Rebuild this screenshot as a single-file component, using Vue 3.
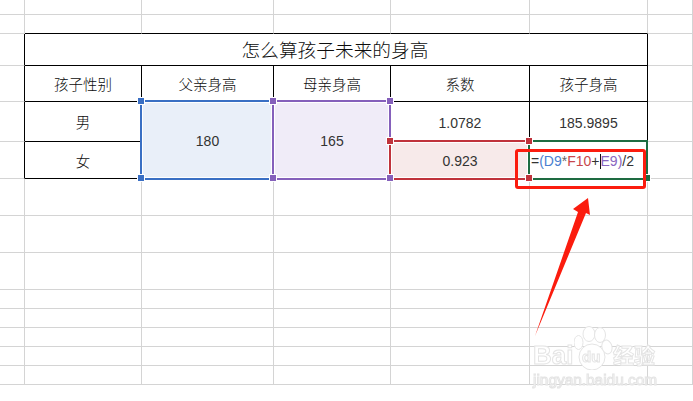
<script setup>
const blank = (n) => Array.from({ length: n }, () => ({ k: 'g' }))
const cells = [
  ...blank(7),
  { k: 'g' }, { k: 'g tb' }, { k: 'g tb' }, { k: 'g tb' }, { k: 'g tb' }, { k: 'g tb' }, { k: 'g' },
  { k: 'g lb' }, { k: 't title', text: '怎么算孩子未来的身高' }, { k: 'g' },
  { k: 'g lb' }, { k: 't cjk', text: '孩子性别' }, { k: 't cjk', text: '父亲身高' }, { k: 't cjk', text: '母亲身高' }, { k: 't cjk', text: '系数' }, { k: 't cjk', text: '孩子身高' }, { k: 'g' },
  { k: 'g lb' }, { k: 't cjk', text: '男' }, { k: 't tall low', text: '180', mark: 'blue', handles: ['tl', 'bl'] }, { k: 't tall low', text: '165', mark: 'purple', handles: ['tl', 'tr', 'bl', 'br'] }, { k: 't low', text: '1.0782' }, { k: 't low', text: '185.9895' }, { k: 'g' },
  { k: 'g lb' }, { k: 't cjk', text: '女' }, { k: 't red low', text: '0.923', mark: 'red', handles: ['tl', 'pbl'] }, { k: 't formula low', mark: 'green', handles: ['rtl', 'rbl', 'br'] }, { k: 'g' },
  ...blank(7 * 8),
]
</script>

<template>
  <div class="sheet">
    <div v-for="(c, i) in cells" :key="i" class="cell" :class="c.k">
      <div v-if="c.mark" class="mark" :class="c.mark">
        <i v-for="h in c.handles" :key="h" class="handle" :class="h"></i>
      </div>
      <span v-if="c.text" class="label">{{ c.text }}</span>
      <span v-if="c.mark === 'green'" class="label code"><b class="ink">=</b><b class="fb">(D9</b><b class="star">*</b><b class="rd">F10</b><b class="ink">+</b><b class="caret"></b><b class="pp">E9)</b><b class="ink">/2</b></span>
    </div>

    <div class="callout"></div>
    <svg class="arrow" width="70" height="150" viewBox="530 195 70 150">
      <polygon points="588,198 590,215 586,213 535,336 578,212 573,209" fill="#fb1c0e" />
    </svg>

    <div class="wm">
      <svg class="paw" width="48" height="44" viewBox="0 0 48 44">
        <g fill="#fff" stroke="#e4e4e4" stroke-width="1">
          <ellipse cx="4.5" cy="16.5" rx="4.5" ry="7" />
          <ellipse cx="15" cy="8" rx="6" ry="7.5" />
          <ellipse cx="26" cy="9" rx="5.5" ry="7.5" />
          <ellipse cx="33" cy="21" rx="5" ry="7" transform="rotate(-15 33 21)" />
          <circle cx="18" cy="31" r="13" />
        </g>
      </svg>
      <span class="w big a">Bai</span>
      <span class="w du">du</span>
      <span class="w big c">经验</span>
      <span class="w url">jingyan.baidu.com</span>
    </div>
  </div>
</template>

<style>
html, body { margin: 0; background: #fff; }
</style>

<style scoped>
.sheet {
  position: relative;
  width: 693px;
  height: 401px;
  overflow: hidden;
  background: #fff;
  display: grid;
  grid-template-columns: 25px 117px 132px 117px 139px 118px 45px;
  grid-template-rows: 15px 19px 32px 36px 40px 37px 37px 37px 37px 19px 19px 19px 19px 19px 17px;
  font-family: "Liberation Sans", "Noto Sans CJK SC", sans-serif;
  font-size: 14px;
  font-weight: 300;
  color: #333;
}
.cell {
  box-sizing: border-box;
  position: relative;
  display: flex;
  align-items: center;
  justify-content: center;
  min-width: 0;
}
.g { border-right: 1px solid #d4d4d4; border-bottom: 1px solid #d4d4d4; }
.g.tb { border-bottom-color: #000; }
.g.lb { border-right-color: #000; }
.t { border-right: 1px solid #000; border-bottom: 1px solid #000; }
.cjk { font-size: 14.5px; color: #0c0c0c; }
.title { grid-column: span 5; font-size: 18.7px; color: #0c0c0c; }
.title .label { top: -1px; left: -1px; }
.tall { grid-row: span 2; }
.red { grid-column: 5; }
.formula { grid-column: 6; justify-content: flex-start; }
.label { position: relative; z-index: 2; }
.low .label { top: 1px; }
.code { display: flex; align-items: center; margin-left: 1px; white-space: pre; }
.code b { font-weight: 300; }
.ink { color: #333; }
.fb { color: #4a7fd0; }
.star { color: #666; }
.rd { color: #c8474c; }
.pp { color: #8a66c0; }
.caret { width: 1px; height: 15px; background: #111; }

.mark {
  position: absolute;
  z-index: 1;
  box-sizing: border-box;
  left: -2px;
  top: -2px;
  right: -1px;
  bottom: -2px;
  border: 2px solid;
  box-shadow: inset 0 0 0 1px #fff;
}
.mark.blue { border-color: #3a6fc4; background: #e9eff9; }
.mark.purple { border-color: #8560bb; background: #f0ecf8; }
.mark.red { border-color: #c0333c; background: #f7eaea; }
.mark.green { border-color: #1e6b41; box-shadow: none; background: transparent; }
.handle {
  position: absolute;
  width: 6px;
  height: 6px;
  outline: 1px solid #fff;
  z-index: 3;
}
.mark.blue .handle { background: #3a6fc4; }
.mark.purple .handle { background: #8560bb; }
.mark.red .handle { background: #c0333c; }
.mark.green .handle { background: #1e6b41; }
.mark .handle.pbl { background: #8560bb; }
.mark .handle.rtl, .mark .handle.rbl { background: #c0333c; }
.tl, .rtl { left: -4px; top: -4px; }
.tr { right: -4px; top: -4px; }
.bl, .rbl, .pbl { left: -4px; bottom: -3px; }
.br { right: -4px; bottom: -3px; }

.callout {
  position: absolute;
  z-index: 5;
  left: 515px;
  top: 149px;
  width: 131px;
  height: 40px;
  box-sizing: border-box;
  border: 3px solid #fb1c0e;
  border-radius: 3px;
}
.arrow { position: absolute; z-index: 5; left: 530px; top: 195px; }

.wm { position: absolute; z-index: 6; left: 533px; top: 326px; width: 125px; height: 62px; filter: blur(0.3px); }
.paw { position: absolute; left: 41px; top: 0; }
.w {
  position: absolute;
  color: #fff;
  -webkit-text-stroke: 1px #e4e4e4;
  white-space: nowrap;
}
.big { font-size: 26px; line-height: 26px; font-weight: 700; }
.a { left: 0; top: 16px; }
.c { left: 80px; top: 19px; font-size: 21px; line-height: 21px; }
.du { left: 49px; top: 23px; font-size: 15px; line-height: 15px; font-weight: 700; }
.url { left: 0; top: 46px; font-size: 15.4px; line-height: 16px; }
</style>
